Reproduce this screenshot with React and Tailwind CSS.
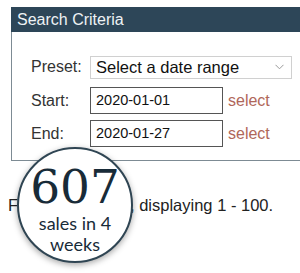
import React from 'react';

const sans = { fontFamily: '"Liberation Sans", Arial, sans-serif' };

function Row({ label, children }) {
  return (
    <div className="flex items-center">
      <div className="w-[78px] shrink-0 pl-[19px] text-[16px] text-[#333]">{label}</div>
      {children}
    </div>
  );
}

export default function App() {
  return (
    <div className="relative w-[300px] h-[273px] overflow-hidden bg-white" style={sans}>
      <div className="ml-[11px] mt-[7px] w-[300px]">
        <div className="h-[25px] bg-[#2d4658] px-[6px] text-[16px] leading-[25px] text-[#eef2f5]">
          Search Criteria
        </div>
        <div className="h-[129px] border-l border-b border-[#7d8b94] pt-[23px] flex flex-col">
          <Row label="Preset:">
            <div className="w-[202px] h-[23px] shrink-0 border border-[#d0d0d0] flex items-center justify-between pl-[5px] pr-[7px] text-[16.5px] text-[#111]">
              <span>Select a date range</span>
              <svg width="9" height="6" viewBox="0 0 9 6" fill="none" stroke="#999" strokeWidth="1">
                <path d="M0.5 0.8 L4.5 4.8 L8.5 0.8" />
              </svg>
            </div>
          </Row>
          <div className="h-[8px]" />
          <Row label="Start:">
            <div className="w-[133px] h-[27px] shrink-0 border border-[#555] flex items-center pl-[5px] text-[14.5px] text-[#111]">
              2020-01-01
            </div>
            <span className="ml-[5px] text-[16px] text-[#b0675a]">select</span>
          </Row>
          <div className="h-[6px]" />
          <Row label="End:">
            <div className="w-[133px] h-[27px] shrink-0 border border-[#555] flex items-center pl-[5px] text-[14.5px] text-[#111]">
              2020-01-27
            </div>
            <span className="ml-[5px] text-[16px] text-[#b0675a]">select</span>
          </Row>
        </div>
      </div>

      <p className="mt-[35px] pl-[8px] text-[16.5px] leading-[19px] text-[#222] whitespace-nowrap">
        Found 607 sales, displaying 1 - 100.
      </p>

      <div className="absolute left-[17px] top-[147px] w-[116px] h-[116px] rounded-full border-[2.5px] border-[#2f4553] bg-white shadow-[0_2px_6px_rgba(0,0,0,0.35)] flex flex-col items-center text-[#182b38]">
        <div
          className="mt-[13px] text-[47px] leading-[50px]"
          style={{ fontFamily: '"DejaVu Serif", "Liberation Serif", serif' }}
        >
          607
        </div>
        <div className="mt-[1px] text-[18px] leading-[21px] text-center" style={{ fontFamily: 'Lato, "Open Sans", sans-serif' }}>
          sales in 4
          <br />
          weeks
        </div>
      </div>
    </div>
  );
}
